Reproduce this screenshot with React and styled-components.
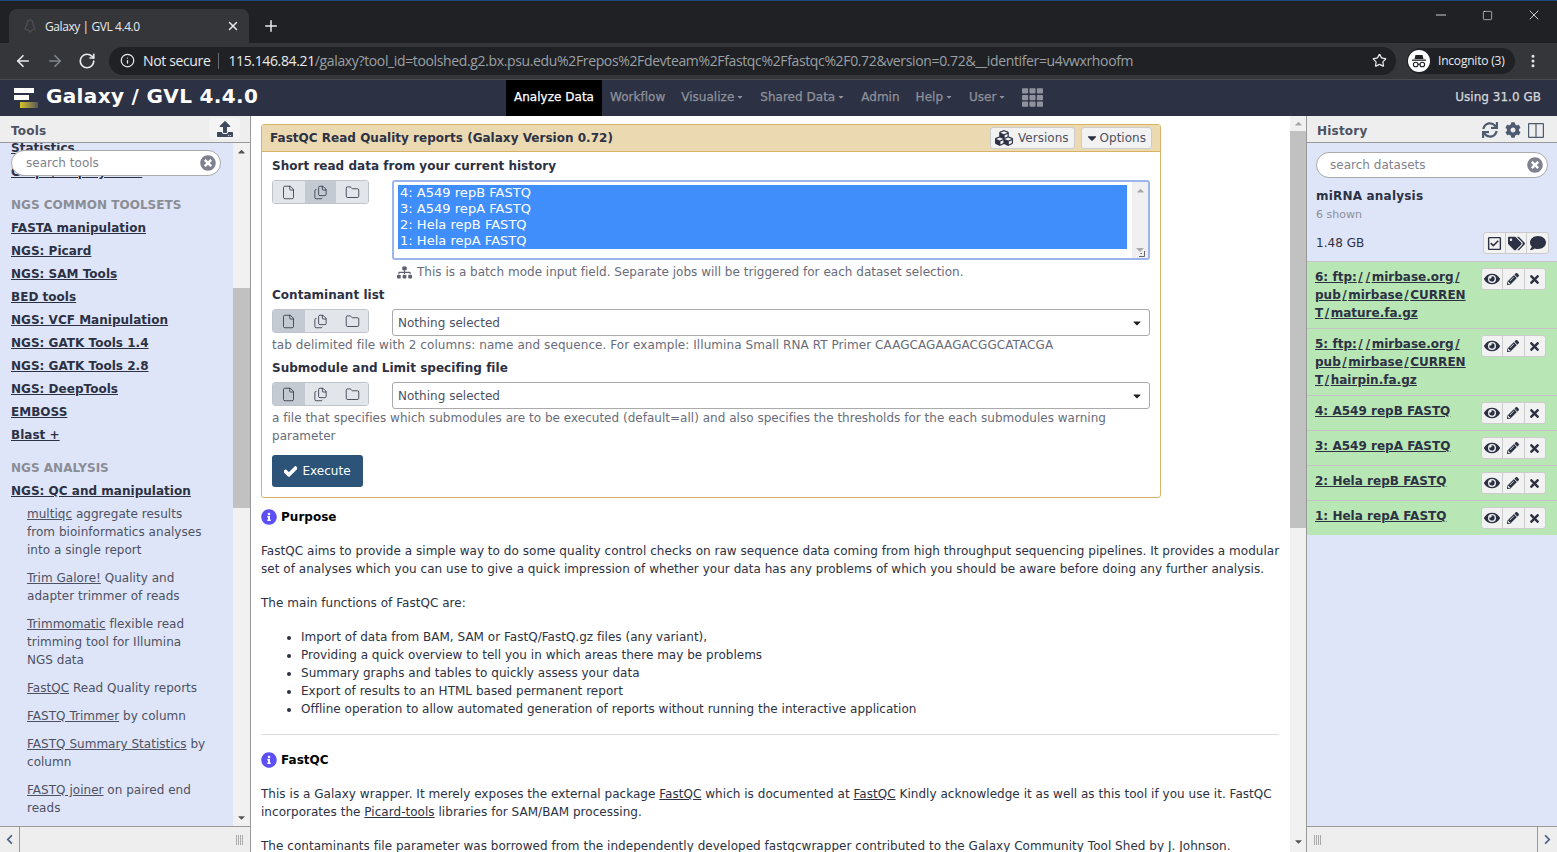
import React from 'react';
import styled, { createGlobalStyle } from 'styled-components';
import { ArrowLeft, ArrowRight, RotateCw, Info, Star, Plus, X, Minus, Square, MoreVertical, File, Files, Folder } from 'lucide-react';
import {
  FaUpload, FaSync, FaCog, FaCubes, FaCaretDown, FaCaretUp, FaCheck, FaSitemap, FaEye, FaPencilAlt, FaTimes,
  FaTimesCircle, FaRegCheckSquare, FaTags, FaComment, FaInfoCircle, FaChevronLeft, FaChevronRight, FaTh,
} from 'react-icons/fa';

const GlobalStyle = createGlobalStyle`
  html, body { margin: 0; height: 100%; overflow: hidden; }
  body { font-family: "DejaVu Sans", Verdana, sans-serif; font-size: 12px; color: #2c3143; letter-spacing: 0.02px; }
  * { box-sizing: border-box; }
`;

const Page = styled.div`
  height: 852px;
  display: flex;
  flex-direction: column;
  overflow: hidden;
`;

/* browser chrome */
const TitleBar = styled.div`
  height: 43px;
  flex: none;
  background: #202124;
  border-top: 1px solid #1c4a7e;
  display: flex;
  align-items: flex-end;
  padding-left: 9px;
`;
const Tab = styled.div`
  width: 240px;
  height: 34px;
  background: #35363a;
  border-radius: 8px 8px 0 0;
  display: flex;
  align-items: center;
  padding: 0 9px 0 15px;
  color: #e8eaed;
  font: 12px "Open Sans", sans-serif;
  letter-spacing: -0.42px;
`;
const TabLabel = styled.span`
  flex: 1;
  margin-left: 9px;
`;
const NewTab = styled.div`
  color: #e8eaed;
  display: flex;
  align-items: center;
  height: 34px;
  margin-left: 13px;
`;
const WindowButtons = styled.div`
  margin-left: auto;
  height: 100%;
  display: flex;
  align-items: center;
  gap: 33px;
  padding: 0 15px 14px 0;
  color: #e8eaed;
`;
const ToolBar = styled.div`
  height: 37px;
  flex: none;
  background: #35363a;
  border-bottom: 1px solid #4a4b4f;
  display: flex;
  align-items: center;
  padding: 0 13px 1px 14px;
  color: #e8eaed;
`;
const NavIcons = styled.div`
  display: flex;
  gap: 14px;
  align-items: center;
`;
const AddressBar = styled.div`
  width: 1287px;
  height: 28px;
  margin-left: 13px;
  border-radius: 14px;
  background: #202124;
  display: flex;
  align-items: center;
  padding: 0 9px 0 11px;
  font: 14px "Open Sans", sans-serif;
  letter-spacing: -0.36px;
  white-space: nowrap;
`;
const NotSecure = styled.span`
  margin-left: 8px;
  padding-right: 8px;
  border-right: 1px solid #6a6b6f;
  line-height: 16px;
  color: #e8eaed;
`;
const Host = styled.span`
  margin-left: 9px;
  color: #e8eaed;
`;
const UrlRest = styled.span`
  color: #9aa0a6;
`;
const StarWrap = styled.span`
  margin-left: auto;
  display: flex;
`;
const Profile = styled.div`
  margin-left: 11px;
  width: 108px;
  height: 26px;
  border-radius: 13px;
  background: #202124;
  display: flex;
  align-items: center;
  gap: 8px;
  padding-left: 1px;
  font: 12px "Open Sans", sans-serif;
  letter-spacing: -0.2px;
`;
const ProfileBadge = styled.span`
  width: 22px;
  height: 22px;
  border-radius: 50%;
  background: #fff;
  display: flex;
  align-items: center;
  justify-content: center;
`;
const MoreWrap = styled.span`
  margin-left: 10px;
  display: flex;
`;

/* masthead */
const Masthead = styled.div`
  height: 36px;
  flex: none;
  background: #2c3143;
  display: flex;
  align-items: stretch;
`;
const Brand = styled.div`
  width: 506px;
  flex: none;
  display: flex;
  align-items: center;
  padding: 0 0 1px 14px;
  gap: 8px;
  color: #fff;
  font-size: 20px;
  font-weight: 700;
  letter-spacing: 0.35px;
  white-space: nowrap;
`;
const BrandText = styled.span`
  margin-top: -3px;
`;
const NavItem = styled.div`
  display: flex;
  align-items: center;
  padding: 0 8px 2px;
  font-size: 12px;
  -webkit-text-stroke: 0.25px currentColor;
  color: ${p => (p.$active ? '#fff' : '#8f929c')};
  background: ${p => (p.$active ? '#000' : 'transparent')};
  white-space: nowrap;
  & svg { margin-left: 2px; }
`;
const GridIcon = styled.div`
  display: flex;
  align-items: center;
  color: #8f929c;
  margin-left: 8px;
  padding-bottom: 2px;
`;
const Quota = styled.div`
  margin-left: auto;
  padding: 0 16px 2px 0;
  display: flex;
  align-items: center;
  font-size: 12px;
  -webkit-text-stroke: 0.25px currentColor;
  color: #d6d7db;
`;

/* three panes */
const Body = styled.div`
  flex: 1;
  min-height: 0;
  display: flex;
`;
const SidePanel = styled.aside`
  width: ${p => p.$width}px;
  flex: none;
  display: flex;
  flex-direction: column;
  background: #dfe5f9;
  border-left: ${p => (p.$right ? '1px solid #999' : '0')};
  border-right: ${p => (p.$right ? '0' : '1px solid #999')};
`;
const PanelHead = styled.div`
  height: 27px;
  flex: none;
  background: #eee;
  border-bottom: 1px solid #999;
  display: flex;
  align-items: center;
  justify-content: space-between;
  padding: 4px ${p => p.$pad}px 0 ${p => (p.$right ? 10 : 11)}px;
  font-size: 12px;
  font-weight: 700;
  letter-spacing: 0.2px;
  color: #4d5162;
`;
const UploadButton = styled.div`
  width: 31px;
  height: 21px;
  margin-top: -5px;
  background: #f4f4f4;
  border-radius: 3px;
  display: flex;
  align-items: center;
  justify-content: center;
  color: #3f4a5e;
`;
const PanelMiddle = styled.div`
  flex: 1;
  min-height: 0;
  display: flex;
  position: relative;
`;
const PanelFoot = styled.div`
  height: 26px;
  flex: none;
  background: #eee;
  border-top: 1px solid #999;
  display: flex;
  align-items: center;
  color: #4c6488;
`;
const FootArrow = styled.div`
  width: 20px;
  height: 100%;
  display: flex;
  align-items: center;
  justify-content: center;
  border-left: ${p => (p.$right ? '1px solid #999' : '0')};
  border-right: ${p => (p.$right ? '0' : '1px solid #999')};
`;
const Grip = styled.div`
  width: 7px;
  height: 10px;
  margin: ${p => (p.$right ? '0 0 0 7px' : '0 7px 0 0')};
  background: repeating-linear-gradient(90deg, #aaa 0 1px, transparent 1px 2px);
`;
const GripSpace = styled.div`
  flex: 1;
  display: flex;
  justify-content: ${p => (p.$right ? 'flex-start' : 'flex-end')};
`;

const ScrollBar = styled.div`
  width: ${p => p.$width}px;
  flex: none;
  background: #f1f1f1;
  display: flex;
  flex-direction: column;
  align-items: stretch;
`;
const ScrollArrow = styled.div`
  height: ${p => p.$height}px;
  flex: none;
  display: flex;
  align-items: center;
  justify-content: center;
  color: ${p => p.$color || '#555'};
`;
const ScrollThumb = styled.div`
  height: ${p => p.$height}px;
  flex: none;
  margin-top: ${p => p.$top}px;
  background: #c1c1c1;
`;
const ScrollFill = styled.div`
  flex: 1;
`;

const SearchPill = styled.div`
  position: absolute;
  top: ${p => p.$top}px;
  left: ${p => p.$left}px;
  width: ${p => p.$width}px;
  height: 26px;
  background: #fff;
  border: 1px solid #aaa;
  border-radius: 13px;
  display: flex;
  align-items: center;
  justify-content: space-between;
  padding: 0 4px 0 ${p => p.$pad}px;
  font-size: 12px;
  color: #7f828e;
`;

/* tool list */
const ToolList = styled.div`
  flex: 1;
  min-width: 0;
  height: 100%;
  overflow: hidden;
  padding: 0 10px 0 11px;
  line-height: 18px;
`;
const ClippedTitle = styled.div`
  height: 23px;
  margin-top: ${p => p.$top}px;
  font-weight: 700;
  color: #2c3143;
  text-decoration: underline;
  line-height: 18px;
  white-space: nowrap;
`;
const SectionLabel = styled.div`
  margin-top: ${p => p.$top}px;
  height: 23px;
  font-weight: 700;
  color: #8b8d96;
  line-height: 18px;
`;
const ToolGroup = styled.div`
  height: 23px;
  font-weight: 700;
  line-height: 18px;
  color: #2c3143;
  text-decoration: underline;
`;
const ToolEntry = styled.div`
  margin: 0 15px 10px 16px;
  color: #4d5162;
  line-height: 18px;
  letter-spacing: 0.03px;
  & u { color: #4d5162; }
`;

/* centre */
const Center = styled.main`
  flex: 1;
  min-width: 0;
  display: flex;
  background: #fff;
`;
const CenterScroll = styled.div`
  flex: 1;
  min-width: 0;
  padding: 8px 11px 0 10px;
  overflow: hidden;
  color: #2c3143;
  line-height: 18px;
`;
const ToolCard = styled.section`
  width: 900px;
  height: 374px;
  border: 1px solid #d8b365;
  border-radius: 3px;
  display: flex;
  flex-direction: column;
`;
const CardHead = styled.div`
  height: 27px;
  flex: none;
  background: #ebd9b2;
  border-bottom: 1px solid #d8b365;
  display: flex;
  align-items: center;
  padding: 0 8px;
  font-weight: 700;
  color: #2c3143;
  gap: 6px;
`;
const CardTitle = styled.div`
  flex: 1;
`;
const HeadButton = styled.div`
  height: 22px;
  padding: 0 5px 0 ${p => p.$pad}px;
  display: flex;
  align-items: center;
  gap: ${p => p.$gap}px;
  background: #f2f2f2;
  border: 1px solid #ccc;
  border-radius: 3px;
  color: #4d5162;
  font-weight: 400;
`;
const CardBody = styled.div`
  padding: 5px 10px 0;
  flex: 1;
`;
const FieldLabel = styled.div`
  font-weight: 700;
  line-height: 18px;
  color: #2c3143;
  margin-bottom: 5px;
`;
const FieldRow = styled.div`
  display: flex;
  align-items: flex-start;
  gap: 23px;
`;
const ModeGroup = styled.div`
  width: 97px;
  height: 24px;
  flex: none;
  display: flex;
  border: 1px solid #bfc4cc;
  border-radius: 3px;
  overflow: hidden;
`;
const ModeButton = styled.div`
  flex: 1;
  display: flex;
  align-items: center;
  justify-content: center;
  background: ${p => (p.$on ? '#c3cad2' : '#e2e5e9')};
  color: #2c3143;
`;
const MultiSelect = styled.div`
  flex: 1;
  height: 80px;
  border: 2px solid #9db5ee;
  border-radius: 3px;
  display: flex;
  padding-top: 3px;
`;
const Options = styled.div`
  flex: 1;
  margin: 0 5px 0 4px;
  height: 64px;
  padding-left: 2px;
  background: #3f8efc;
  color: #fff;
  font-size: 13px;
  line-height: 16px;
`;
const SelectScroll = styled.div`
  width: 16px;
  margin-top: -3px;
  background: #f0f0f0;
  display: flex;
  flex-direction: column;
  align-items: center;
  justify-content: space-between;
  padding: 3px 0 1px;
  color: #a8a8a8;
`;
const SingleSelect = styled.div`
  flex: 1;
  height: 27px;
  background: #fff;
  border: 1px solid #aaa;
  border-radius: 3px;
  display: flex;
  align-items: center;
  justify-content: space-between;
  padding: 0 6px 0 5px;
  color: #4d5162;
`;
const Hint = styled.div`
  color: #686c7a;
  line-height: 18px;
  margin: ${p => p.$top}px 0 ${p => p.$bottom}px ${p => p.$left}px;
  display: ${p => (p.$flex ? 'flex' : 'block')};
  letter-spacing: ${p => p.$spacing || 0.02}px;
  gap: 5px;
  align-items: center;
`;
const ExecuteButton = styled.div`
  width: 91px;
  height: 32px;
  margin-top: 10px;
  border-radius: 3px;
  background: #2c5378;
  color: #fff;
  display: flex;
  align-items: center;
  justify-content: center;
  gap: 5px;
  & svg { stroke: currentColor; stroke-width: 40px; }
`;
const InfoTitle = styled.div`
  margin-top: ${p => p.$top}px;
  display: flex;
  align-items: center;
  gap: 4px;
  font-weight: 700;
  color: #000;
  line-height: 18px;
  & svg { color: #5b4ff5; }
`;
const Para = styled.p`
  margin: ${p => p.$top}px -3px 0 0;
  line-height: 18px;
  letter-spacing: 0.035px;
`;
const Bullets = styled.ul`
  margin: 16px 0 0;
  padding-left: 40px;
  line-height: 18px;
`;
const Rule = styled.hr`
  border: 0;
  border-top: 1px solid #ddd;
  margin: 16px 0 0;
`;

/* history */
const HistoryBody = styled.div`
  flex: 1;
  min-height: 0;
  padding-top: 44px;
  display: flex;
  flex-direction: column;
`;
const HistoryHeadIcons = styled.div`
  display: flex;
  gap: 7px;
  align-items: center;
  margin-top: -2px;
  color: #4d5a70;
`;
const HistoryName = styled.div`
  padding-left: 9px;
  font-weight: 700;
  line-height: 18px;
  color: #2c3143;
  letter-spacing: 0.2px;
`;
const Shown = styled.div`
  padding-left: 9px;
  margin-top: 1px;
  font-size: 11px;
  line-height: 18px;
  color: #8b8d96;
`;
const SizeRow = styled.div`
  display: flex;
  justify-content: space-between;
  align-items: center;
  padding: 0 8px 0 9px;
  margin: 8px 0 7px;
  height: 22px;
`;
const IconGroup = styled.div`
  display: flex;
  width: ${p => p.$width}px;
  height: 22px;
  flex: none;
  border: 1px solid #ccc;
  border-radius: 3px;
  background: #f2f2f2;
  overflow: hidden;
`;
const GroupCell = styled.div`
  flex: 1;
  display: flex;
  align-items: center;
  justify-content: center;
  color: #2c3143;
  & + & { border-left: 1px solid #ccc; }
`;
const Dataset = styled.div`
  background: #b8e6b4;
  border-top: 1px solid #c4c4c4;
  padding: 6px 11px 4px 8px;
  min-height: ${p => p.$height}px;
  display: flex;
  justify-content: space-between;
  align-items: flex-start;
`;
const DatasetTitle = styled.div`
  font-weight: 700;
  line-height: 18px;
  text-decoration: underline;
  color: #2c3143;
  white-space: nowrap;
`;
const Slash = styled.span`
  padding: 0 1.5px;
`;

const Incognito = () => (
  <svg width="16" height="14" viewBox="0 0 16 14" fill="#202124">
    <path d="M4.5 1h7l1 4h-9z" />
    <rect x="1" y="5.5" width="14" height="1.3" />
    <circle cx="4.7" cy="10.5" r="2.3" fill="none" stroke="#202124" strokeWidth="1.1" />
    <circle cx="11.3" cy="10.5" r="2.3" fill="none" stroke="#202124" strokeWidth="1.1" />
    <rect x="6.8" y="9.8" width="2.4" height="1" />
  </svg>
);

const Favicon = () => (
  <svg width="12" height="14" viewBox="0 0 12 14" fill="none" stroke="#4c4d51" strokeWidth="1.4">
    <path d="M6 1c2 0 3 2 3 4l2 5-3 1-2 2-2-2-3-1 2-5c0-2 1-4 3-4z" />
  </svg>
);

const Logo = () => (
  <svg width="24" height="20" viewBox="0 0 24 20">
    <defs>
      <linearGradient id="logoGold" x1="0" x2="1" y1="0" y2="0">
        <stop offset="0" stopColor="#d9c12a" />
        <stop offset="1" stopColor="#55565a" />
      </linearGradient>
    </defs>
    <rect x="0" y="0" width="20" height="5" fill="#fff" />
    <rect x="0" y="7" width="15" height="5" fill="#fff" />
    <rect x="6" y="14" width="18" height="6" fill="url(#logoGold)" />
  </svg>
);

const ColumnsIcon = () => (
  <svg width="16" height="15" viewBox="0 0 16 15" fill="none" stroke="currentColor" strokeWidth="1.2">
    <rect x="0.6" y="0.6" width="14.8" height="13.8" rx="0.5" />
    <path d="M8 0.6v13.8" />
  </svg>
);

const ResizeHandle = () => (
  <svg width="9" height="9" viewBox="0 0 9 9">
    <path d="M0 0h8L4 4z" fill="#aaa" />
    <path d="M8.5 3v5.5H3M6 5.5H4.5" stroke="#666" fill="none" />
  </svg>
);

const MODE_ICONS = [File, Files, Folder];

const ModeButtons = ({ on }) => (
  <ModeGroup>
    {MODE_ICONS.map((Icon, i) => (
      <ModeButton key={i} $on={i === on}>
        <Icon size={15} strokeWidth={1.3} />
      </ModeButton>
    ))}
  </ModeGroup>
);

const Actions = () => (
  <IconGroup $width={65}>
    <GroupCell><FaEye size={16} /></GroupCell>
    <GroupCell><FaPencilAlt size={12} /></GroupCell>
    <GroupCell><FaTimes size={13} /></GroupCell>
  </IconGroup>
);

const SlashedLine = ({ text }) => (
  <div>
    {text.split('/').map((part, i) => (
      <React.Fragment key={i}>
        {i > 0 && <Slash>/</Slash>}
        {part}
      </React.Fragment>
    ))}
  </div>
);

const GROUPS_A = ['FASTA manipulation', 'NGS: Picard', 'NGS: SAM Tools', 'BED tools', 'NGS: VCF Manipulation', 'NGS: GATK Tools 1.4', 'NGS: GATK Tools 2.8', 'NGS: DeepTools', 'EMBOSS', 'Blast +'];

const TOOLS = [
  ['multiqc', ' aggregate results from bioinformatics analyses into a single report'],
  ['Trim Galore!', ' Quality and adapter trimmer of reads'],
  ['Trimmomatic', ' flexible read trimming tool for Illumina NGS data'],
  ['FastQC', ' Read Quality reports'],
  ['FASTQ Trimmer', ' by column'],
  ['FASTQ Summary Statistics', ' by column'],
  ['FASTQ joiner', ' on paired end reads'],
];

const DATASETS = [
  [['6: ftp://mirbase.org/', 'pub/mirbase/CURREN', 'T/mature.fa.gz'], 67],
  [['5: ftp://mirbase.org/', 'pub/mirbase/CURREN', 'T/hairpin.fa.gz'], 67],
  [['4: A549 repB FASTQ'], 35],
  [['3: A549 repA FASTQ'], 35],
  [['2: Hela repB FASTQ'], 35],
  [['1: Hela repA FASTQ'], 35],
];

const BULLETS = [
  'Import of data from BAM, SAM or FastQ/FastQ.gz files (any variant),',
  'Providing a quick overview to tell you in which areas there may be problems',
  'Summary graphs and tables to quickly assess your data',
  'Export of results to an HTML based permanent report',
  'Offline operation to allow automated generation of reports without running the interactive application',
];

export default function App() {
  return (
    <Page>
      <GlobalStyle />
      <TitleBar>
        <Tab>
          <Favicon />
          <TabLabel>Galaxy | GVL 4.4.0</TabLabel>
          <X size={14} strokeWidth={2.5} />
        </Tab>
        <NewTab><Plus size={18} /></NewTab>
        <WindowButtons>
          <Minus size={16} strokeWidth={1.3} />
          <Square size={11} strokeWidth={1.4} />
          <X size={16} strokeWidth={1.3} />
        </WindowButtons>
      </TitleBar>
      <ToolBar>
        <NavIcons>
          <ArrowLeft size={18} strokeWidth={2.2} />
          <ArrowRight size={18} color="#80868b" strokeWidth={2.2} />
          <RotateCw size={18} strokeWidth={2.2} />
        </NavIcons>
        <AddressBar>
          <Info size={15} />
          <NotSecure>Not secure</NotSecure>
          <Host>115.146.84.21</Host>
          <UrlRest>/galaxy?tool_id=toolshed.g2.bx.psu.edu%2Frepos%2Fdevteam%2Ffastqc%2Ffastqc%2F0.72&amp;version=0.72&amp;__identifer=u4vwxrhoofm</UrlRest>
          <StarWrap><Star size={15} /></StarWrap>
        </AddressBar>
        <Profile>
          <ProfileBadge><Incognito /></ProfileBadge>
          Incognito (3)
        </Profile>
        <MoreWrap><MoreVertical size={16} strokeWidth={2.5} /></MoreWrap>
      </ToolBar>
      <Masthead>
        <Brand><Logo /><BrandText>Galaxy / GVL 4.4.0</BrandText></Brand>
        <NavItem $active>Analyze Data</NavItem>
        <NavItem>Workflow</NavItem>
        <NavItem>Visualize<FaCaretDown size={8} /></NavItem>
        <NavItem>Shared Data<FaCaretDown size={8} /></NavItem>
        <NavItem>Admin</NavItem>
        <NavItem>Help<FaCaretDown size={8} /></NavItem>
        <NavItem>User<FaCaretDown size={8} /></NavItem>
        <GridIcon><FaTh size={21} /></GridIcon>
        <Quota>Using 31.0 GB</Quota>
      </Masthead>
      <Body>
        <SidePanel $width={251}>
          <PanelHead $pad={10}>
            Tools
            <UploadButton><FaUpload size={16} /></UploadButton>
          </PanelHead>
          <PanelMiddle>
            <ToolList>
              <ClippedTitle $top={-4}>Statistics</ClippedTitle>
              <ClippedTitle $top={1}>Graph/Display Data</ClippedTitle>
              <SectionLabel $top={10}>NGS COMMON TOOLSETS</SectionLabel>
              {GROUPS_A.map(g => <ToolGroup key={g}>{g}</ToolGroup>)}
              <SectionLabel $top={10}>NGS ANALYSIS</SectionLabel>
              <ToolGroup>NGS: QC and manipulation</ToolGroup>
              {TOOLS.map(([link, rest]) => (
                <ToolEntry key={link}><u>{link}</u>{rest}</ToolEntry>
              ))}
            </ToolList>
            <ScrollBar $width={17}>
              <ScrollArrow $height={17}><FaCaretUp size={11} /></ScrollArrow>
              <ScrollThumb $top={128} $height={220} />
              <ScrollFill />
              <ScrollArrow $height={17}><FaCaretDown size={11} /></ScrollArrow>
            </ScrollBar>
            <SearchPill $top={7} $left={11} $width={210} $pad={14}>
              search tools
              <FaTimesCircle size={16} color="#7f828e" />
            </SearchPill>
          </PanelMiddle>
          <PanelFoot>
            <FootArrow><FaChevronLeft size={11} /></FootArrow>
            <GripSpace><Grip /></GripSpace>
          </PanelFoot>
        </SidePanel>

        <Center>
          <CenterScroll>
            <ToolCard>
              <CardHead>
                <CardTitle>FastQC Read Quality reports (Galaxy Version 0.72)</CardTitle>
                <HeadButton $gap={5} $pad={4}><FaCubes size={18} color="#2c3143" />Versions</HeadButton>
                <HeadButton $gap={1} $pad={3}><FaCaretDown size={14} color="#2c3143" />Options</HeadButton>
              </CardHead>
              <CardBody>
                <FieldLabel>Short read data from your current history</FieldLabel>
                <FieldRow>
                  <ModeButtons on={1} />
                  <MultiSelect>
                    <Options>
                      <div>4: A549 repB FASTQ</div>
                      <div>3: A549 repA FASTQ</div>
                      <div>2: Hela repB FASTQ</div>
                      <div>1: Hela repA FASTQ</div>
                    </Options>
                    <SelectScroll>
                      <FaCaretUp size={11} />
                      <ResizeHandle />
                    </SelectScroll>
                  </MultiSelect>
                </FieldRow>
                <Hint $flex $top={3} $bottom={5} $left={125}>
                  <FaSitemap size={15} color="#5d6170" />
                  This is a batch mode input field. Separate jobs will be triggered for each dataset selection.
                </Hint>
                <FieldLabel>Contaminant list</FieldLabel>
                <FieldRow>
                  <ModeButtons on={0} />
                  <SingleSelect>Nothing selected<FaCaretDown size={12} color="#222" /></SingleSelect>
                </FieldRow>
                <Hint $top={0} $bottom={5} $left={0} $spacing={0.07}>
                  tab delimited file with 2 columns: name and sequence. For example: Illumina Small RNA RT Primer CAAGCAGAAGACGGCATACGA
                </Hint>
                <FieldLabel>Submodule and Limit specifing file</FieldLabel>
                <FieldRow>
                  <ModeButtons on={0} />
                  <SingleSelect>Nothing selected<FaCaretDown size={12} color="#222" /></SingleSelect>
                </FieldRow>
                <Hint $top={0} $bottom={0} $left={0}>
                  a file that specifies which submodules are to be executed (default=all) and also specifies the thresholds for the each submodules warning parameter
                </Hint>
                <ExecuteButton><FaCheck size={13} />Execute</ExecuteButton>
              </CardBody>
            </ToolCard>

            <InfoTitle $top={10}><FaInfoCircle size={16} />Purpose</InfoTitle>
            <Para $top={16}>
              FastQC aims to provide a simple way to do some quality control checks on raw sequence data coming from high throughput sequencing pipelines. It provides a modular set of analyses which you can use to give a quick impression of whether your data has any problems of which you should be aware before doing any further analysis.
            </Para>
            <Para $top={16}>The main functions of FastQC are:</Para>
            <Bullets>
              {BULLETS.map(b => <li key={b}>{b}</li>)}
            </Bullets>
            <Rule />
            <InfoTitle $top={16}><FaInfoCircle size={16} />FastQC</InfoTitle>
            <Para $top={16}>
              This is a Galaxy wrapper. It merely exposes the external package <u>FastQC</u> which is documented at <u>FastQC</u> Kindly acknowledge it as well as this tool if you use it. FastQC incorporates the <u>Picard-tools</u> libraries for SAM/BAM processing.
            </Para>
            <Para $top={16}>
              The contaminants file parameter was borrowed from the independently developed fastqcwrapper contributed to the Galaxy Community Tool Shed by J. Johnson.
            </Para>
          </CenterScroll>
          <ScrollBar $width={16}>
            <ScrollArrow $height={15} $color="#aaa"><FaCaretUp size={11} /></ScrollArrow>
            <ScrollThumb $top={0} $height={397} />
            <ScrollFill />
            <ScrollArrow $height={22}><FaCaretDown size={11} /></ScrollArrow>
          </ScrollBar>
        </Center>

        <SidePanel $width={251} $right>
          <PanelHead $pad={13} $right>
            History
            <HistoryHeadIcons>
              <FaSync size={16} />
              <FaCog size={16} />
              <ColumnsIcon />
            </HistoryHeadIcons>
          </PanelHead>
          <PanelMiddle>
            <HistoryBody>
              <HistoryName>miRNA analysis</HistoryName>
              <Shown>6 shown</Shown>
              <SizeRow>
                1.48 GB
                <IconGroup $width={66}>
                  <GroupCell><FaRegCheckSquare size={15} /></GroupCell>
                  <GroupCell><FaTags size={17} /></GroupCell>
                  <GroupCell><FaComment size={16} /></GroupCell>
                </IconGroup>
              </SizeRow>
              {DATASETS.map(([lines, h]) => (
                <Dataset key={lines[0] + lines[lines.length - 1]} $height={h}>
                  <DatasetTitle>
                    {lines.map(l => <SlashedLine key={l} text={l} />)}
                  </DatasetTitle>
                  <Actions />
                </Dataset>
              ))}
            </HistoryBody>
            <SearchPill $top={9} $left={9} $width={232} $pad={13}>
              search datasets
              <FaTimesCircle size={16} color="#7f828e" />
            </SearchPill>
          </PanelMiddle>
          <PanelFoot>
            <GripSpace $right><Grip $right /></GripSpace>
            <FootArrow $right><FaChevronRight size={11} /></FootArrow>
          </PanelFoot>
        </SidePanel>
      </Body>
    </Page>
  );
}
